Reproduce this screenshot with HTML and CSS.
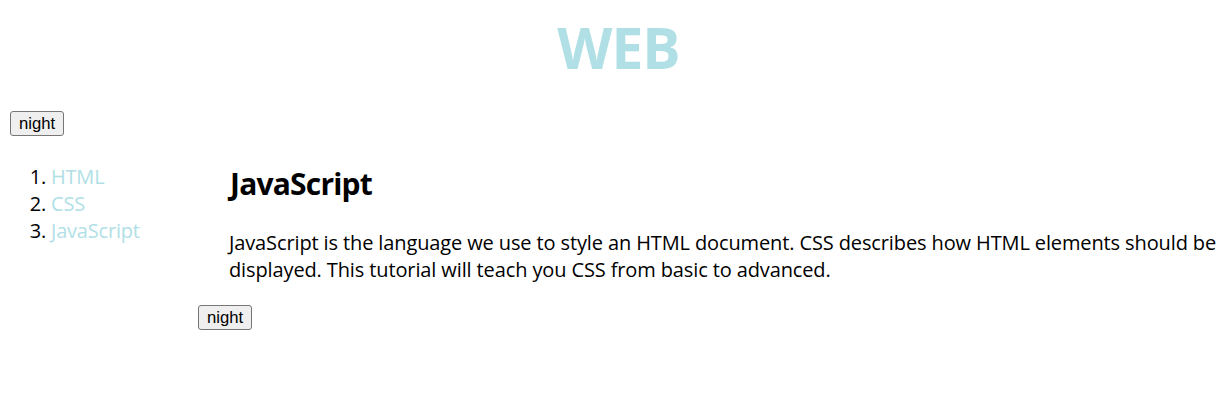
FILE: index.html
```html
<!DOCTYPE html>
<html lang="en">
<head>
<meta charset="utf-8">
<title>WEB</title>
<link rel="stylesheet" href="styles.css">
</head>
<body>
<h1 class="title"><a class="link" href="#">WEB</a></h1>
<div class="bar"><input class="btn" type="button" value="night"></div>
<div class="grid">
  <ol class="nav">
    <li><a class="link" href="#">HTML</a></li>
    <li><a class="link" href="#">CSS</a></li>
    <li><a class="link" href="#">JavaScript</a></li>
  </ol>
  <div class="article">
    <h2 class="heading">JavaScript</h2>
    <p class="text">JavaScript is the language we use to style an HTML document. CSS describes how HTML elements should be displayed. This tutorial will teach you CSS from basic to advanced.</p>
    <input class="btn" type="button" value="night">
  </div>
</div>
</body>
</html>
```

FILE: styles.css
```css
body {
  margin: 10px 3px 10px 10px;
  font-family: "Open Sans", "Noto Sans CJK KR", sans-serif;
  font-size: 20px;
  color: #000;
  background: #fff;
}

.link {
  color: #b0e0e6;
  text-decoration: none;
}

.title {
  margin: 0;
  font-size: 57px;
  line-height: 74px;
  font-weight: 700;
  letter-spacing: -1px;
  text-align: center;
}

.bar {
  margin-top: 27px;
}

.btn {
  display: block;
  box-sizing: border-box;
  height: 25px;
  margin: 0;
  padding: 0 8px;
  font-family: "Liberation Sans", Arial, sans-serif;
  font-size: 16.67px;
  line-height: 23px;
  letter-spacing: 0;
  color: #000;
  background: #efefef;
  border: 1px solid #767676;
  border-radius: 3px;
}

.grid {
  display: grid;
  grid-template-columns: 188px 1fr;
  margin-top: 27px;
}

.nav {
  margin: 0;
  padding-left: 41px;
  line-height: 27px;
  letter-spacing: -0.2px;
}

.heading {
  margin: 3px 0 0;
  padding-left: 32px;
  font-size: 30px;
  line-height: 36px;
  font-weight: 700;
  letter-spacing: -0.8px;
}

.text {
  margin: 27px 0 22px;
  padding-left: 31px;
  line-height: 27px;
  letter-spacing: -0.12px;
}
```
